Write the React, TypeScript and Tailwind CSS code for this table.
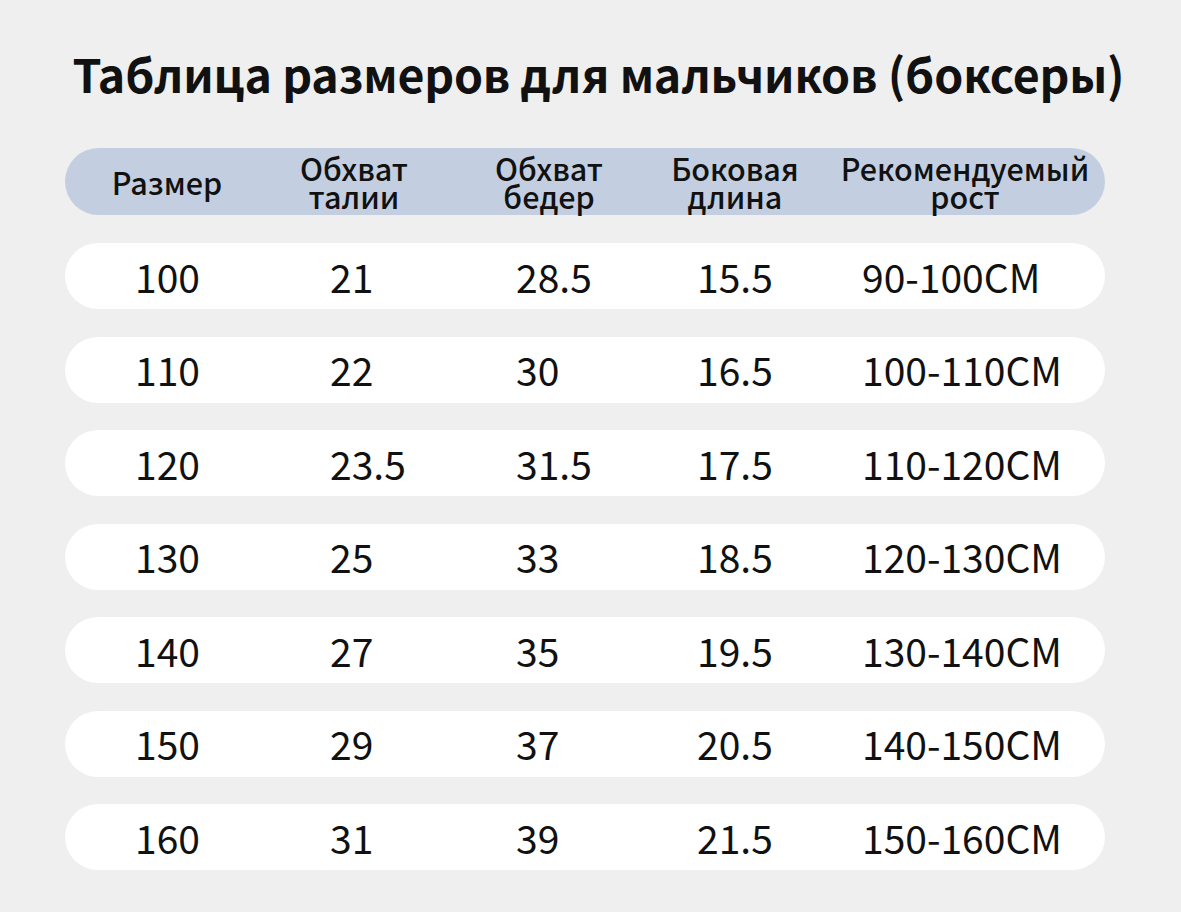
import React from "react";

const headers: [string, string?][] = [
  ["Размер"],
  ["Обхват", "талии"],
  ["Обхват", "бедер"],
  ["Боковая", "длина"],
  ["Рекомендуемый", "рост"],
];

const rows: string[][] = [
  ["100", "21", "28.5", "15.5", "90-100CM"],
  ["110", "22", "30", "16.5", "100-110CM"],
  ["120", "23.5", "31.5", "17.5", "110-120CM"],
  ["130", "25", "33", "18.5", "120-130CM"],
  ["140", "27", "35", "19.5", "130-140CM"],
  ["150", "29", "37", "20.5", "140-150CM"],
  ["160", "31", "39", "21.5", "150-160CM"],
];

// left padding of each data column inside its grid cell
const cellPad = ["pl-[70px]", "pl-[61px]", "pl-[77px]", "pl-[38px]", "pl-[37px]"];
const headPad = ["pl-0", "pl-0", "pl-0", "pr-[14px]", "pl-0"];

const grid = "grid grid-cols-[204px_170px_220px_166px_280px] items-center";

const App: React.FC = () => {
  return (
    <div
      className="w-[1181px] h-[912px] bg-[#efefef] text-[#111] overflow-hidden"
      style={{ fontFamily: '"Noto Sans CJK SC", "Noto Sans", sans-serif' }}
    >
      <h1 className="pt-[43px] h-[148px] text-center text-[46.5px] font-bold leading-[60px] tracking-[-0.2px] pl-[16px]">
        Таблица размеров для мальчиков (боксеры)
      </h1>

      <div className="ml-[65px] w-[1040px] flex flex-col">
        {/* header pill */}
        <div className={`${grid} h-[67px] rounded-full bg-[#c3cfe0] text-[30.5px] font-medium leading-[28px]`}>
          {headers.map(([a, b], i) => (
            <div key={i} className={`flex flex-col items-center ${headPad[i]}`}>
              <span>{a}</span>
              {b && <span>{b}</span>}
            </div>
          ))}
        </div>

        <div className="mt-[28px] flex flex-col gap-[27.5px]">
          {rows.map((r, ri) => (
            <div key={ri} className={`${grid} h-[66px] rounded-full bg-white text-[39px] leading-none`}>
              {r.map((v, ci) => (
                <div key={ci} className={cellPad[ci]}>
                  {v}
                </div>
              ))}
            </div>
          ))}
        </div>
      </div>
    </div>
  );
};

export default App;
